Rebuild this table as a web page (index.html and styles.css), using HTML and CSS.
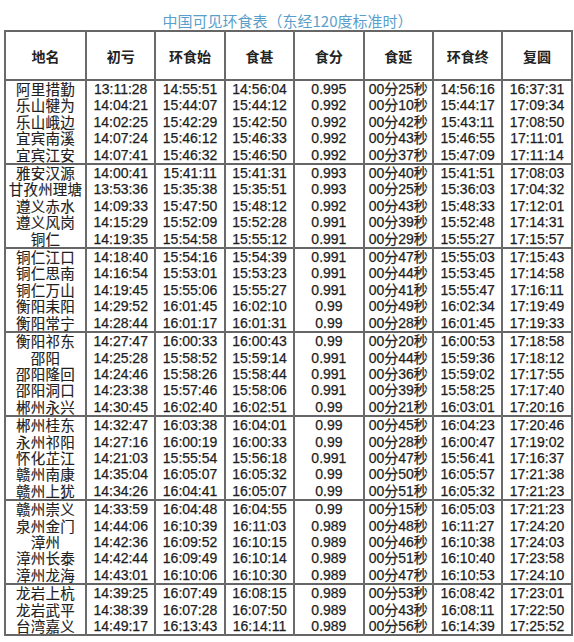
FILE: index.html
```html
<!DOCTYPE html>
<html lang="zh-CN">
<head>
<meta charset="utf-8">
<title>中国可见环食表</title>
<link rel="stylesheet" href="styles.css">
</head>
<body>
<div class="page">
  <h1 class="title">中国可见环食表（东经120度标准时）</h1>
  <table class="eclipse">
    <colgroup>
      <col class="c-name"><col class="c-t"><col class="c-t"><col class="c-t"><col class="c-t"><col class="c-t"><col class="c-t"><col class="c-t">
    </colgroup>
    <thead>
      <tr><th>地名</th><th>初亏</th><th>环食始</th><th>食甚</th><th>食分</th><th>食延</th><th>环食终</th><th>复圆</th></tr>
    </thead>
    <tbody>
      <tr><td>阿里措勤</td><td>13:11:28</td><td>14:55:51</td><td>14:56:04</td><td>0.995</td><td>00分25秒</td><td>14:56:16</td><td>16:37:31</td></tr>
      <tr><td>乐山犍为</td><td>14:04:21</td><td>15:44:07</td><td>15:44:12</td><td>0.992</td><td>00分10秒</td><td>15:44:17</td><td>17:09:34</td></tr>
      <tr><td>乐山峨边</td><td>14:02:25</td><td>15:42:29</td><td>15:42:50</td><td>0.992</td><td>00分42秒</td><td>15:43:11</td><td>17:08:50</td></tr>
      <tr><td>宜宾南溪</td><td>14:07:24</td><td>15:46:12</td><td>15:46:33</td><td>0.992</td><td>00分43秒</td><td>15:46:55</td><td>17:11:01</td></tr>
      <tr><td>宜宾江安</td><td>14:07:41</td><td>15:46:32</td><td>15:46:50</td><td>0.992</td><td>00分37秒</td><td>15:47:09</td><td>17:11:14</td></tr>
    </tbody>
    <tbody>
      <tr><td>雅安汉源</td><td>14:00:41</td><td>15:41:11</td><td>15:41:31</td><td>0.993</td><td>00分40秒</td><td>15:41:51</td><td>17:08:03</td></tr>
      <tr><td>甘孜州理塘</td><td>13:53:36</td><td>15:35:38</td><td>15:35:51</td><td>0.993</td><td>00分25秒</td><td>15:36:03</td><td>17:04:32</td></tr>
      <tr><td>遵义赤水</td><td>14:09:33</td><td>15:47:50</td><td>15:48:12</td><td>0.992</td><td>00分43秒</td><td>15:48:33</td><td>17:12:01</td></tr>
      <tr><td>遵义风岗</td><td>14:15:29</td><td>15:52:09</td><td>15:52:28</td><td>0.991</td><td>00分39秒</td><td>15:52:48</td><td>17:14:31</td></tr>
      <tr><td>铜仁</td><td>14:19:35</td><td>15:54:58</td><td>15:55:12</td><td>0.991</td><td>00分29秒</td><td>15:55:27</td><td>17:15:57</td></tr>
    </tbody>
    <tbody>
      <tr><td>铜仁江口</td><td>14:18:40</td><td>15:54:16</td><td>15:54:39</td><td>0.991</td><td>00分47秒</td><td>15:55:03</td><td>17:15:43</td></tr>
      <tr><td>铜仁思南</td><td>14:16:54</td><td>15:53:01</td><td>15:53:23</td><td>0.991</td><td>00分44秒</td><td>15:53:45</td><td>17:14:58</td></tr>
      <tr><td>铜仁万山</td><td>14:19:45</td><td>15:55:06</td><td>15:55:27</td><td>0.991</td><td>00分41秒</td><td>15:55:47</td><td>17:16:11</td></tr>
      <tr><td>衡阳耒阳</td><td>14:29:52</td><td>16:01:45</td><td>16:02:10</td><td>0.99</td><td>00分49秒</td><td>16:02:34</td><td>17:19:49</td></tr>
      <tr><td>衡阳常宁</td><td>14:28:44</td><td>16:01:17</td><td>16:01:31</td><td>0.99</td><td>00分28秒</td><td>16:01:45</td><td>17:19:33</td></tr>
    </tbody>
    <tbody>
      <tr><td>衡阳祁东</td><td>14:27:47</td><td>16:00:33</td><td>16:00:43</td><td>0.99</td><td>00分20秒</td><td>16:00:53</td><td>17:18:58</td></tr>
      <tr><td>邵阳</td><td>14:25:28</td><td>15:58:52</td><td>15:59:14</td><td>0.991</td><td>00分44秒</td><td>15:59:36</td><td>17:18:12</td></tr>
      <tr><td>邵阳隆回</td><td>14:24:46</td><td>15:58:26</td><td>15:58:44</td><td>0.991</td><td>00分36秒</td><td>15:59:02</td><td>17:17:55</td></tr>
      <tr><td>邵阳洞口</td><td>14:23:38</td><td>15:57:46</td><td>15:58:06</td><td>0.991</td><td>00分39秒</td><td>15:58:25</td><td>17:17:40</td></tr>
      <tr><td>郴州永兴</td><td>14:30:45</td><td>16:02:40</td><td>16:02:51</td><td>0.99</td><td>00分21秒</td><td>16:03:01</td><td>17:20:16</td></tr>
    </tbody>
    <tbody>
      <tr><td>郴州桂东</td><td>14:32:47</td><td>16:03:38</td><td>16:04:01</td><td>0.99</td><td>00分45秒</td><td>16:04:23</td><td>17:20:46</td></tr>
      <tr><td>永州祁阳</td><td>14:27:16</td><td>16:00:19</td><td>16:00:33</td><td>0.99</td><td>00分28秒</td><td>16:00:47</td><td>17:19:02</td></tr>
      <tr><td>怀化芷江</td><td>14:21:03</td><td>15:55:54</td><td>15:56:18</td><td>0.991</td><td>00分47秒</td><td>15:56:41</td><td>17:16:37</td></tr>
      <tr><td>赣州南康</td><td>14:35:04</td><td>16:05:07</td><td>16:05:32</td><td>0.99</td><td>00分50秒</td><td>16:05:57</td><td>17:21:38</td></tr>
      <tr><td>赣州上犹</td><td>14:34:26</td><td>16:04:41</td><td>16:05:07</td><td>0.99</td><td>00分51秒</td><td>16:05:32</td><td>17:21:23</td></tr>
    </tbody>
    <tbody>
      <tr><td>赣州崇义</td><td>14:33:59</td><td>16:04:48</td><td>16:04:55</td><td>0.99</td><td>00分15秒</td><td>16:05:03</td><td>17:21:23</td></tr>
      <tr><td>泉州金门</td><td>14:44:06</td><td>16:10:39</td><td>16:11:03</td><td>0.989</td><td>00分48秒</td><td>16:11:27</td><td>17:24:20</td></tr>
      <tr><td>漳州</td><td>14:42:36</td><td>16:09:52</td><td>16:10:15</td><td>0.989</td><td>00分46秒</td><td>16:10:38</td><td>17:24:03</td></tr>
      <tr><td>漳州长泰</td><td>14:42:44</td><td>16:09:49</td><td>16:10:14</td><td>0.989</td><td>00分51秒</td><td>16:10:40</td><td>17:23:58</td></tr>
      <tr><td>漳州龙海</td><td>14:43:01</td><td>16:10:06</td><td>16:10:30</td><td>0.989</td><td>00分47秒</td><td>16:10:53</td><td>17:24:10</td></tr>
    </tbody>
    <tbody>
      <tr><td>龙岩上杭</td><td>14:39:25</td><td>16:07:49</td><td>16:08:15</td><td>0.989</td><td>00分53秒</td><td>16:08:42</td><td>17:23:01</td></tr>
      <tr><td>龙岩武平</td><td>14:38:39</td><td>16:07:28</td><td>16:07:50</td><td>0.989</td><td>00分43秒</td><td>16:08:11</td><td>17:22:50</td></tr>
      <tr><td>台湾嘉义</td><td>14:49:17</td><td>16:13:43</td><td>16:14:11</td><td>0.989</td><td>00分56秒</td><td>16:14:39</td><td>17:25:52</td></tr>
    </tbody>
  </table>
</div>
</body>
</html>
```

FILE: styles.css
```css
html, body {
  margin: 0;
  padding: 0;
  background: #ffffff;
}

.page {
  width: 574px;
  padding: 12px 0 0 4px;
  box-sizing: border-box;
  font-family: "Liberation Sans", "Noto Sans CJK SC", sans-serif;
  color: #1e1e1e;
}

.title {
  margin: 0;
  width: 567px;
  height: 18px;
  line-height: 18px;
  font-size: 15px;
  font-weight: normal;
  text-align: center;
  color: #5a9fcb;
  font-family: "Noto Sans CJK SC", "Liberation Sans", sans-serif;
}

.eclipse {
  border-collapse: collapse;
  table-layout: fixed;
  width: 567px;
  border: 2px solid #666;
}

.c-name { width: 81px; }
.c-t { width: 69.4px; }

.eclipse th,
.eclipse td {
  border-left: 2px solid #6a6a6a;
  border-right: 2px solid #6a6a6a;
  padding: 0;
  text-align: center;
  white-space: nowrap;
}

.eclipse th {
  height: 47px;
  font-size: 14px;
  font-weight: bold;
  color: #222;
  font-family: "Noto Sans CJK SC", "Liberation Sans", sans-serif;
  border-bottom: 2px solid #666;
}

.eclipse td {
  height: 16.4px;
  line-height: 16.4px;
  font-size: 14px;
  -webkit-text-stroke: 0.25px #1e1e1e;
}

.eclipse td:first-child {
  font-size: 14.5px;
  line-height: 16.4px;
  font-family: "Noto Sans CJK SC", sans-serif;
  letter-spacing: 0.2px;
  -webkit-text-stroke: 0.15px #1e1e1e;
}

.eclipse tbody {
  border-top: 2px solid #666;
}
```
